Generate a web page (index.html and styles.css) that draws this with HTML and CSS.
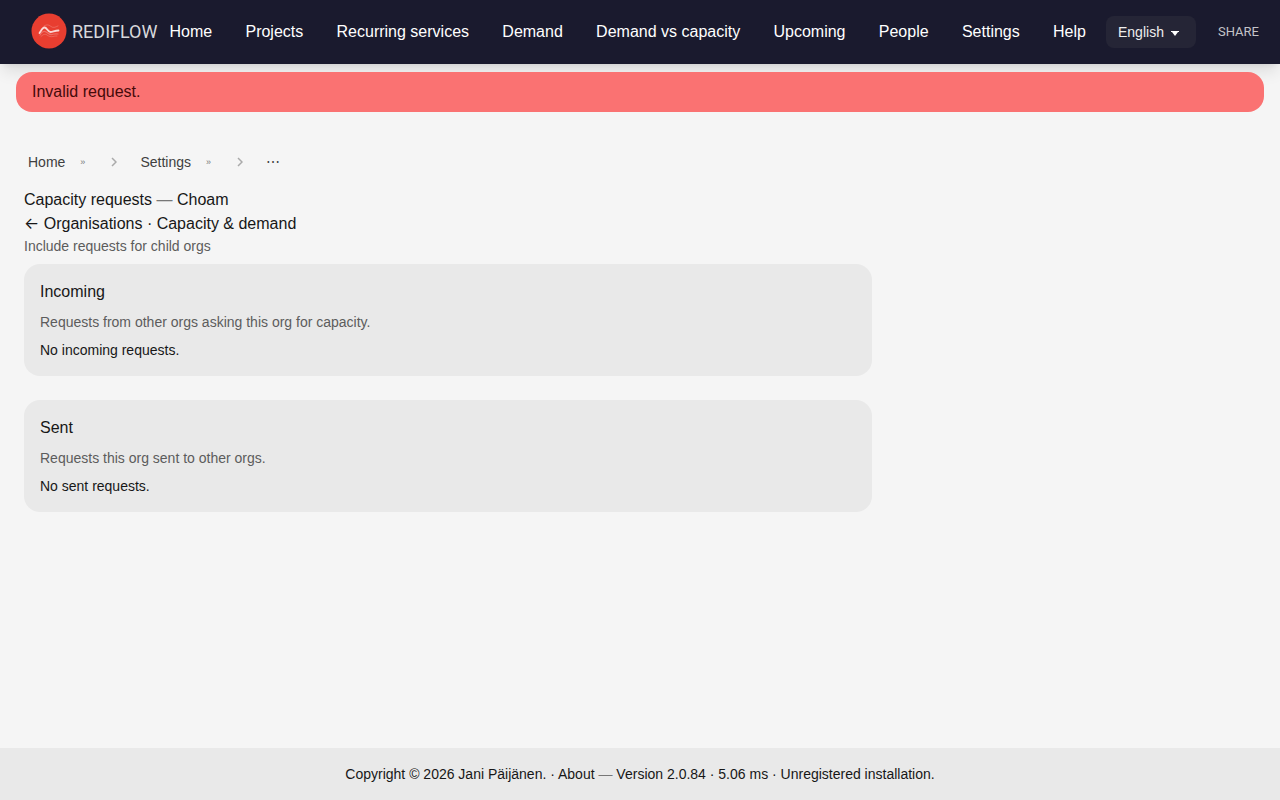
FILE: index.html
```
<!DOCTYPE html>
<html lang="en">
<head>
  <meta charset="UTF-8" />
  <meta name="viewport" content="width=device-width, initial-scale=1.0" />
  <title>Capacity requests — Choam</title>
  <link rel="stylesheet" href="styles.css">
</head>
<body>
  <header class="navbar">
    <a class="brand" href="#">
      <svg class="brand-mark" viewBox="0 0 36 36" aria-hidden="true">
        <circle cx="18" cy="18" r="17.5" fill="#e83e30" />
        <g fill="none" stroke="#fff" stroke-linecap="round" stroke-linejoin="round">
          <path d="M13 13c3-2 5-1 7 .5s4 1 7-.5" stroke-width="1" opacity=".2" />
          <path d="M8.500 20c1.500-2 3-5.500 5-5.500 2.500 0 3 4.500 6 4.500 2.500 0 4-1.500 8-1.500" stroke-width="1.800" opacity=".8" />
          <path d="M9 22c2-3 4-4.500 6-3s4 3 6 2.500 3-1 6-.5" stroke-width="1.200" opacity=".25" />
          <path d="M10 23.500c2-2 4-3 6-1.500s4 2 6 1.500 2-.5 4-.5" stroke-width="1" opacity=".2" />
        </g>
      </svg>
      <span class="brand-name">REDIFLOW</span>
    </a>
    <nav class="menu">
      <a href="#">Home</a>
      <a href="#">Projects</a>
      <a href="#">Recurring services</a>
      <a href="#">Demand</a>
      <a href="#">Demand vs capacity</a>
      <a href="#">Upcoming</a>
      <a href="#">People</a>
      <a href="#">Settings</a>
      <a href="#">Help</a>
    </nav>
    <div class="tools">
      <div class="language">
        <select aria-label="Language">
          <option>English</option>
        </select>
        <svg class="caret" viewBox="0 0 8 5" aria-hidden="true"><path d="M0 0h8v1H7L4 5 1 1H0z" fill="#fff" /></svg>
      </div>
      <button type="button" class="share">SHARE</button>
    </div>
  </header>

  <div class="alert" role="alert">Invalid request.</div>

  <main>
    <nav class="breadcrumbs" aria-label="Breadcrumb">
      <a href="#">Home</a>
      <span class="raquo">»</span>
      <svg class="chevron" viewBox="0 0 6 10" aria-hidden="true"><path d="M1 1l4 4-4 4" /></svg>
      <a href="#">Settings</a>
      <span class="raquo">»</span>
      <svg class="chevron" viewBox="0 0 6 10" aria-hidden="true"><path d="M1 1l4 4-4 4" /></svg>
      <span>⋯</span>
    </nav>

    <h1>Capacity requests <span class="dash">—</span> Choam</h1>
    <p class="links"><a href="#"><span class="arrow">←</span> Organisations</a> · <a href="#">Capacity &amp; demand</a></p>
    <a class="include" href="#">Include requests for child orgs</a>

    <section class="card">
      <h2>Incoming</h2>
      <p class="hint">Requests from other orgs asking this org for capacity.</p>
      <p>No incoming requests.</p>
    </section>
    <section class="card">
      <h2>Sent</h2>
      <p class="hint">Requests this org sent to other orgs.</p>
      <p>No sent requests.</p>
    </section>
  </main>

  <footer>Copyright © 2026 Jani Päijänen. · <a href="#">About</a> <span class="dash">—</span> Version 2.0.84 · 5.06 ms · Unregistered installation.</footer>
</body>
</html>
```
FILE: styles.css
```
* { box-sizing: border-box; margin: 0; padding: 0; }
body {
  font-family: "Liberation Sans", Arial, sans-serif;
  font-size: 16px;
  line-height: 24px;
  background: #f5f5f5;
  color: #171717;
  display: flex;
  flex-direction: column;
  min-height: 100vh;
}
a { color: inherit; text-decoration: none; }
h1, h2 { font-size: 16px; font-weight: normal; }
.dash { color: #777; }

/* Top bar */
.navbar {
  display: flex;
  align-items: center;
  height: 64px;
  padding: 0 21px 0 31px;
  background: #1a1a2e;
  color: #fff;
  box-shadow: 0 10px 15px -3px rgba(0,0,0,0.1), 0 4px 6px -4px rgba(0,0,0,0.1);
}
.brand { display: flex; align-items: center; gap: 5px; }
.brand-mark { width: 36px; height: 36px; margin-bottom: 2px; }
.brand-name {
  font-family: Roboto, sans-serif;
  font-size: 18px;
  color: #d8d8dc;
}
.menu {
  flex: 1;
  display: flex;
  justify-content: space-between;
  margin: 0 20px 0 12px;
  white-space: nowrap;
}
.tools { display: flex; align-items: center; gap: 22px; }
.language { position: relative; }
.language select {
  appearance: none;
  display: block;
  width: 90px;
  height: 32px;
  padding: 0 12px;
  border: none;
  border-radius: 8px;
  background: #252536;
  color: #eee;
  font: 14px "Liberation Sans", Arial, sans-serif;
}
.caret {
  position: absolute;
  right: 17px;
  top: 15px;
  width: 8px;
  height: 5px;
  pointer-events: none;
}
.share {
  padding-bottom: 2px;
  border: none;
  background: none;
  color: #c4c4c8;
  font: 13px Roboto, sans-serif;
  cursor: pointer;
}

/* Flash message */
.alert {
  margin: 8px 16px 0;
  padding: 8px 16px;
  border-radius: 16px;
  background: #fa7272;
  color: #450a0a;
}

main {
  flex: 1;
  width: 100%;
  max-width: 896px;
  padding: 36px 24px 24px;
}
.breadcrumbs {
  display: flex;
  align-items: center;
  height: 28px;
  margin-bottom: 12px;
  padding-left: 4px;
  font-size: 14px;
  color: #404040;
}
.raquo { margin: 0 26px 0 15px; font-size: 9px; color: #777; }
.chevron { width: 6px; height: 10px; margin-right: 23px; }
.chevron path { fill: none; stroke: #aaa; stroke-width: 1.5; }
.arrow { font-family: Inter, sans-serif; line-height: 16px; }
.include {
  display: block;
  margin-bottom: 8px;
  font-size: 14px;
  line-height: 20px;
  color: #5c5c5c;
}

.card {
  margin-bottom: 24px;
  padding: 16px;
  border-radius: 16px;
  background: #e9e9e9;
  font-size: 14px;
  line-height: 20px;
}
.card h2 { margin-bottom: 8px; line-height: 24px; }
.hint { margin-bottom: 8px; color: #5c5c5c; }

footer {
  padding: 16px;
  background: #e9e9e9;
  text-align: center;
  font-size: 14px;
  line-height: 20px;
}
```
